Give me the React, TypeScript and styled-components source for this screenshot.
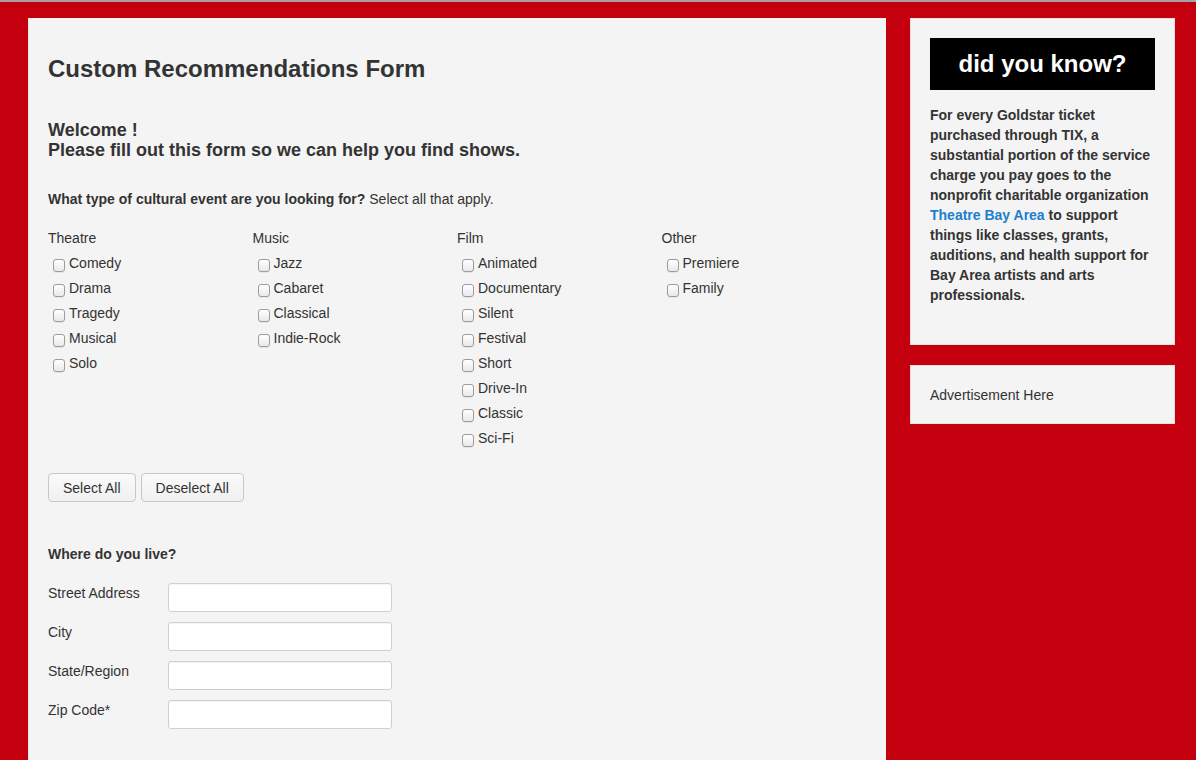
import React from "react";
import styled, { createGlobalStyle } from "styled-components";

const Global = createGlobalStyle`
  html, body { margin: 0; padding: 0; background: #c4000f; }
  body { font-family: "Liberation Sans", Arial, sans-serif; color: #333; overflow: hidden; }
  * { box-sizing: border-box; }
`;

const Page = styled.div`
  border-top: 2px solid #a3a3a3;
  background: #c4000f;
  min-height: 760px;
  display: flex;
  align-items: flex-start;
  gap: 24px;
  padding: 16px 21px 0 28px;
`;

const Main = styled.main`
  width: 858px;
  flex-shrink: 0;
  background: #f4f4f4;
  min-height: 800px;
  padding: 20px 19px 40px;
  border-left: 1px solid #e4e4e4;
`;

const Title = styled.h1`
  margin: 16px 0 36px;
  font-size: 24px;
  line-height: 30px;
  font-weight: bold;
  color: #333;
`;

const Welcome = styled.h2`
  margin: 0 0 29px;
  font-size: 18px;
  line-height: 20px;
  font-weight: bold;
`;

const Question = styled.p`
  margin: 0 0 17px;
  font-size: 14px;
  line-height: 20px;
  b { font-weight: bold; }
`;

const Columns = styled.div`
  display: grid;
  grid-template-columns: repeat(4, 204.5px);
`;

const Column = styled.div`
  display: flex;
  flex-direction: column;
`;

const ColHead = styled.div`
  font-size: 14px;
  line-height: 25px;
  height: 24px;
`;

const Item = styled.label`
  display: flex;
  align-items: center;
  height: 25px;
  font-size: 14px;
  padding-left: 5px;
  gap: 4px;
`;

const Box = styled.input.attrs({ type: "checkbox" })`
  appearance: none;
  -webkit-appearance: none;
  margin: 5px 0 0 0;
  width: 12px;
  height: 13px;
  border: 1px solid #9c9c9c;
  border-radius: 3px;
  background: linear-gradient(#ffffff, #e9e9e9);
  box-shadow: 0 1px 0 rgba(0,0,0,0.06);
  flex: 0 0 auto;
`;

const Buttons = styled.div`
  display: flex;
  gap: 5px;
  margin-top: 23px;
`;

const Button = styled.button`
  height: 29px;
  padding: 0 14px;
  font-family: "Liberation Sans", Arial, sans-serif;
  font-size: 14px;
  color: #333;
  background: linear-gradient(#fafafa, #f0f0f0);
  border: 1px solid #c8c8c8;
  border-radius: 4px;
`;

const SubHead = styled.h3`
  margin: 42px 0 19px;
  font-size: 14px;
  line-height: 20px;
  font-weight: bold;
`;

const FieldRow = styled.div`
  display: grid;
  grid-template-columns: 120px 224px;
  align-items: start;
  margin-bottom: 10px;
`;

const FieldLabel = styled.label`
  font-size: 14px;
  line-height: 20px;
`;

const Input = styled.input`
  height: 29px;
  border: 1px solid #cfcfcf;
  border-radius: 3px;
  background: #fff;
  box-shadow: inset 0 1px 1px rgba(0,0,0,0.05);
`;

const Sidebar = styled.aside`
  width: 265px;
  flex-shrink: 0;
  display: flex;
  flex-direction: column;
  gap: 20px;
`;

const Card = styled.section`
  background: #f4f4f4;
  border: 1px solid #e2e2e2;
  padding: 19px 19px 39px;
`;

const Banner = styled.div`
  background: #000;
  color: #fff;
  height: 52px;
  display: flex;
  align-items: center;
  justify-content: center;
  font-size: 24px;
  font-weight: bold;
  margin-bottom: 15px;
`;

const Info = styled.p`
  margin: 0;
  font-size: 14px;
  line-height: 20px;
  font-weight: bold;
  color: #333;
`;

const Link = styled.a`
  color: #1b7fcc;
  text-decoration: none;
`;

const Ad = styled.section`
  background: #f4f4f4;
  border: 1px solid #e2e2e2;
  padding: 19px 19px 18px;
  font-size: 14px;
  line-height: 20px;
`;

const groups: { title: string; items: string[] }[] = [
  { title: "Theatre", items: ["Comedy", "Drama", "Tragedy", "Musical", "Solo"] },
  { title: "Music", items: ["Jazz", "Cabaret", "Classical", "Indie-Rock"] },
  { title: "Film", items: ["Animated", "Documentary", "Silent", "Festival", "Short", "Drive-In", "Classic", "Sci-Fi"] },
  { title: "Other", items: ["Premiere", "Family"] },
];

const fields = ["Street Address", "City", "State/Region", "Zip Code*"];

export default function App() {
  return (
    <>
      <Global />
      <Page>
        <Main>
          <Title>Custom Recommendations Form</Title>
          <Welcome>
            Welcome !<br />
            Please fill out this form so we can help you find shows.
          </Welcome>
          <Question>
            <b>What type of cultural event are you looking for?</b> Select all that apply.
          </Question>
          <Columns>
            {groups.map((g) => (
              <Column key={g.title}>
                <ColHead>{g.title}</ColHead>
                {g.items.map((it) => (
                  <Item key={it}>
                    <Box />
                    {it}
                  </Item>
                ))}
              </Column>
            ))}
          </Columns>
          <Buttons>
            <Button>Select All</Button>
            <Button>Deselect All</Button>
          </Buttons>
          <SubHead>Where do you live?</SubHead>
          {fields.map((f) => (
            <FieldRow key={f}>
              <FieldLabel>{f}</FieldLabel>
              <Input type="text" />
            </FieldRow>
          ))}
        </Main>
        <Sidebar>
          <Card>
            <Banner>did you know?</Banner>
            <Info>
              For every Goldstar ticket purchased through TIX, a substantial portion of the service charge you pay goes to the nonprofit charitable organization <Link href="#">Theatre Bay Area</Link> to support things like classes, grants, auditions, and health support for Bay Area artists and arts professionals.
            </Info>
          </Card>
          <Ad>Advertisement Here</Ad>
        </Sidebar>
      </Page>
    </>
  );
}
